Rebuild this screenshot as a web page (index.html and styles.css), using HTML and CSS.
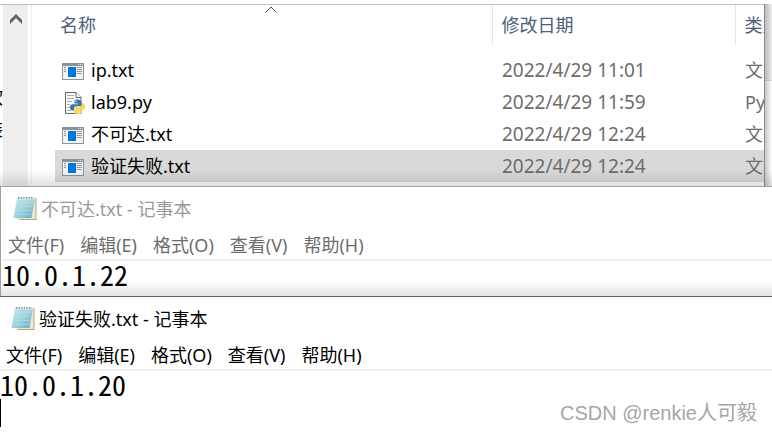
FILE: index.html
```
<!DOCTYPE html>
<html lang="zh-CN">
<head>
<meta charset="utf-8">
<title>记事本</title>
<link rel="stylesheet" href="styles.css">
</head>
<body>
<svg class="defs" aria-hidden="true">
  <symbol id="txt" viewBox="0 0 22 17">
    <path fill="#8b9296" d="M0 0h22v17H0z"/>
    <path fill="#f2f3f3" d="M1 3h20v13H1z"/>
    <path fill="#0078d7" d="M6 4h8v10H6z"/>
    <path stroke="#8f9599" d="M2 4.500h2m-2 2h2m-2 2h2M15 4.500h5m-5 2h5m-5 2h5m-5 2h5"/>
    <path stroke="#e5e8ea" d="M16 1.500h1m1 0h1m1 0h1"/>
  </symbol>
  <symbol id="py" viewBox="0 0 20 22">
    <path fill="#f8f8f8" stroke="#686868" d="M.5.500h10.500l5 5v16H.5z"/>
    <path fill="#fff" stroke="#686868" d="M11 .5v5h5"/>
    <path stroke="#aaa" d="M2 3.500h7m-7 3h7m-7 3h5m-5 3h3m-3 3h3m-3 3h4"/>
    <path fill="#3776ab" d="M12.500 7.500c-3 0-3 1.200-3 3v1h3.500v.8H7.600C5.500 12.300 5 14 5 15.500s.7 3 2.500 3H9v-2c0-1.500 1-2.200 2.300-2.200h3.200c1.300 0 2-1 2-2v-2.300c0-1.500-1.500-2.500-4-2.500z"/>
    <path fill="#ffd94a" d="M17 11.300h1c1.500 0 2 1.700 2 3.200s-.7 3.200-2.300 3.200H13v.8h3.500v1.200c0 1.600-1.500 2.300-3.800 2.300s-3.700-.8-3.700-2.300V17c0-1.200.8-2 2-2h3.500c1.500 0 2.500-1 2.500-2.200z"/>
    <circle cx="11" cy="9.300" r=".7" fill="#fff"/><circle cx="14.800" cy="20.200" r=".7" fill="#fff"/>
  </symbol>
  <symbol id="pad" viewBox="0 0 24 25">
    <linearGradient id="page" x1="0" y1="0" x2="1" y2="1"><stop offset="0" stop-color="#c4e8ef"/><stop offset=".5" stop-color="#9fd4e0"/><stop offset="1" stop-color="#5caabd"/></linearGradient>
    <path fill="#b9a477" d="M21 2h2.500v22h-17V22z"/>
    <path fill="#efe8d0" d="M20 2h2.500v21H4V21z"/>
    <path fill="url(#page)" d="M4 2h18L18.500 22H0.500z"/>
    <path fill="none" stroke="#b5e0e8" stroke-opacity=".6" d="M3.500 6.500h16.500M3 10.500h16.500M2 14.500h17M1.500 18.500h17"/>
    <path fill="#d8eef2" d="M4 1.500h18v2H3.800z"/>
    <path stroke="#66757c" stroke-width="1.300" stroke-dasharray="1.300 1.300" d="M5 1.800h16"/>
  </symbol>
</svg>

<main class="desktop">
  <section class="explorer">
    <div class="nav" aria-hidden="true"><span>软</span><span>装</span></div>
    <div class="scroll">
      <button class="up" aria-label="向上滚动"><svg width="12" height="10" viewBox="0 0 12 10"><path fill="#606060" d="M0 6l6-6 6 6v4L6 4 0 10z"/></svg></button>
    </div>
    <div class="files">
      <table>
        <colgroup><col><col class="c-date"><col class="c-type"></colgroup>
        <thead>
          <tr>
            <th><svg class="sort" width="12" height="7" viewBox="0 0 12 7"><path fill="none" stroke="#555" d="M.5 6.500L6 1l5.500 5.500"/></svg>名称</th>
            <th>修改日期</th><th>类型</th>
          </tr>
        </thead>
        <tbody>
          <tr><td><svg class="i-txt"><use href="#txt"/></svg>ip.txt</td><td class="date">2022/4/29 11:01</td><td>文本</td></tr>
          <tr><td><svg class="i-py"><use href="#py"/></svg>lab9.py</td><td class="date">2022/4/29 11:59</td><td>Py</td></tr>
          <tr><td><svg class="i-txt"><use href="#txt"/></svg>不可达.txt</td><td class="date">2022/4/29 12:24</td><td>文本</td></tr>
          <tr class="selected"><td><svg class="i-txt"><use href="#txt"/></svg>验证失败.txt</td><td class="date">2022/4/29 12:24</td><td>文本</td></tr>
        </tbody>
      </table>
    </div>
    <div class="behind"></div>
  </section>

  <section class="notepad inactive">
    <header><svg class="i-pad"><use href="#pad"/></svg>不可达.txt - 记事本</header>
    <nav><button>文件(F)</button><button>编辑(E)</button><button>格式(O)</button><button>查看(V)</button><button>帮助(H)</button></nav>
    <textarea rows="1" aria-label="不可达.txt" spellcheck="false">10.0.1.22</textarea>
  </section>

  <section class="notepad active">
    <header><svg class="i-pad"><use href="#pad"/></svg>验证失败.txt - 记事本</header>
    <nav><button>文件(F)</button><button>编辑(E)</button><button>格式(O)</button><button>查看(V)</button><button>帮助(H)</button></nav>
    <textarea rows="2" aria-label="验证失败.txt" spellcheck="false">10.0.1.20</textarea>
    <span class="caret"></span>
    <div class="watermark">CSDN @renkie人可毅</div>
  </section>
</main>
</body>
</html>
```

FILE: styles.css
```
* { box-sizing: border-box; }

body {
  margin: 0;
  background: #fff;
  color: #000;
  font: 18px/32px "Noto Sans", "Noto Sans CJK SC", sans-serif;
  overflow: hidden;
}

button {
  border: 0;
  padding: 0;
  background: none;
  color: inherit;
  font: inherit;
}

.defs { position: absolute; width: 0; height: 0; }

.desktop {
  display: flex;
  flex-direction: column;
  min-height: 100vh;
}

/* File list */
.explorer {
  position: relative;
  display: flex;
  padding-top: 4px;
  overflow: hidden;
}

.explorer::after {
  content: "";
  position: absolute;
  inset: auto 0 0;
  height: 16px;
  background: linear-gradient(transparent, rgba(0, 0, 0, .12));
}

.nav {
  display: flex;
  flex-direction: column;
  align-items: flex-end;
  width: 3px;
  padding-top: 76px;
  border-top: 1px solid #bfbfbf;
  overflow: hidden;
}

.scroll {
  width: 29px;
  border-top: 1px solid #bfbfbf;
  background: linear-gradient(90deg, #eee 25px, #fff 25px, #fff 27px, #f5f5f5 27px);
}

.up {
  display: block;
  width: 25px;
  height: 28px;
  line-height: 0;
}

.files {
  flex: 1;
  min-width: 0;
  padding: 0 0 4px 23px;
  border-top: 1px solid #bfbfbf;
}

table {
  width: 100%;
  table-layout: fixed;
  border-collapse: collapse;
}

.c-date { width: 243px; }
.c-type { width: 29px; }

th, td {
  height: 32px;
  padding: 0 0 0 9px;
  overflow: hidden;
  white-space: nowrap;
  text-align: left;
  font-weight: 400;
}

th {
  position: relative;
  height: 40px;
  padding-left: 5px;
  color: #4c607a;
}

th + th { border-left: 1px solid #e5e5e5; padding-left: 9px; }

thead::after {
  content: "";
  display: block;
  height: 9px;
}

td:first-child { padding-left: 7px; }
td + td { padding-left: 10px; color: #6d6d6d; }
td.date { font-size: 19px; }
.selected { background: #d9d9d9; }

td svg { vertical-align: -3px; }
.i-txt { width: 22px; height: 17px; margin-right: 7px; }
td .i-py { width: 20px; height: 22px; margin: 0 6px 0 3px; vertical-align: -5px; }

.sort {
  position: absolute;
  top: 1px;
  left: calc(50% - 8px);
}

.behind {
  width: 8px;
  border-left: 1px solid #8a8a8a;
  background: linear-gradient(90deg, rgba(0, 0, 0, .22), transparent), linear-gradient(#eee 76px, #ddd 76px, #ddd 77px, #fff 77px);
}

/* Notepad windows */
.notepad {
  position: relative;
  background: #fff;
  border-top: 1px solid #a0a0a0;
}

.notepad header {
  display: flex;
  align-items: center;
  gap: 4px;
  height: 43px;
  padding-left: 11px;
}

.i-pad { width: 24px; height: 25px; }

.notepad nav {
  display: flex;
  gap: 16px;
  height: 31px;
  padding-left: 6px;
  border-bottom: 2px solid #f0f0f0;
}

.notepad nav button { height: 29px; line-height: 30px; }

.notepad textarea {
  display: block;
  width: 100%;
  padding: 0;
  border: 0;
  outline: 0;
  resize: none;
  overflow: hidden;
  background: none;
  color: #000;
  font: 28px/26px "Noto Sans CJK SC", sans-serif;
  font-feature-settings: "hwid";
}

.inactive { border-left: 1px solid #a0a0a0; padding: 0 0 9px 1px; background: linear-gradient(0deg, #e4e4e4, #fff 16px); }
.inactive header { color: #999; }
.inactive nav { color: #6d6d6d; }

.active {
  flex: 1;
  border-top-color: #606060;
}

.caret {
  position: absolute;
  top: 102px;
  left: 0;
  width: 1px;
  height: 28px;
  background: #000;
}

.watermark {
  position: absolute;
  right: 15px;
  bottom: 4px;
  color: #a6a6a6;
  font: 20px/32px "Liberation Sans", "Noto Sans CJK SC", sans-serif;
}
```
